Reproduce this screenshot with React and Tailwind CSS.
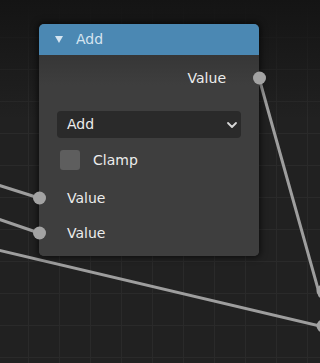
import React from "react";

const Socket = ({ className }) => (
  <span
    className={`absolute top-1/2 -translate-y-1/2 h-[13px] w-[13px] rounded-full bg-[#a3a3a3] ${className}`}
  />
);

const App = () => {
  return (
    <div
      className="relative h-[363px] w-[320px] overflow-hidden bg-[#212121] bg-[linear-gradient(to_right,#2a2a2a_1px,transparent_1px),linear-gradient(to_bottom,#2a2a2a_1px,transparent_1px)] bg-[size:31px_32px] bg-[position:28px_5px]"
      style={{ fontFamily: '"DejaVu Sans", "Liberation Sans", sans-serif' }}
    >
      {/* darker top of the canvas */}
      <div className="absolute inset-x-0 top-0 h-[120px] bg-gradient-to-b from-[#141414] to-transparent" />

      {/* wires */}
      <svg className="absolute inset-0" width="320" height="363">
        <g stroke="#9e9e9e" strokeWidth="3" strokeLinecap="round" fill="none">
          <line x1="259" y1="78" x2="320" y2="296" />
          <line x1="-2" y1="185" x2="39" y2="198" />
          <line x1="-2" y1="219" x2="39" y2="233" />
          <line x1="-2" y1="250" x2="320" y2="326" />
        </g>
        <circle cx="323" cy="291" r="6.5" fill="#a3a3a3" />
        <circle cx="323" cy="326" r="6.5" fill="#a3a3a3" />
      </svg>

      {/* node */}
      <div className="absolute left-[39px] top-[24px] w-[220px] rounded-[5px] bg-[#3e3e3e] shadow-[0_0_6px_2px_rgba(0,0,0,0.55)]">
        <div className="flex h-[31px] items-center gap-[13px] rounded-t-[5px] bg-[#4b88b3] pl-[16px] text-[14px] text-[#d4e4f0]">
          <svg width="8" height="7" viewBox="0 0 8 7">
            <path d="M0 0 H8 L4 7 Z" fill="#d4e4f0" />
          </svg>
          <span>Add</span>
        </div>

        <div className="flex flex-col bg-gradient-to-b from-[#363636] to-[#3e3e3e] to-[30px] rounded-b-[5px] pb-[11px] pt-[11px] text-[14px] text-[#ececec]">
          <div className="relative flex h-[24px] items-center justify-end pr-[33px]">
            <span>Value</span>
            <Socket className="-right-[6.5px]" />
          </div>

          <div className="mx-[18px] mt-[21px] flex h-[27px] items-center justify-between rounded-[4px] bg-[#2a2a2a] pl-[10px] pr-[3px]">
            <span>Add</span>
            <svg width="12" height="12" viewBox="0 0 12 12">
              <path d="M2 4 L6 8 L10 4" stroke="#d8d8d8" strokeWidth="1.8" fill="none" strokeLinecap="round" strokeLinejoin="round" />
            </svg>
          </div>

          <div className="mt-[12px] flex h-[20px] items-center gap-[13px] pl-[21px]">
            <span className="h-[20px] w-[20px] rounded-[3px] bg-[#5e5e5e]" />
            <span>Clamp</span>
          </div>

          <div className="relative mt-[16px] flex h-[24px] items-center pl-[28px]">
            <Socket className="-left-[6.5px]" />
            <span>Value</span>
          </div>

          <div className="relative mt-[11px] flex h-[24px] items-center pl-[28px]">
            <Socket className="-left-[6.5px]" />
            <span>Value</span>
          </div>
        </div>
      </div>
    </div>
  );
};

export default App;
